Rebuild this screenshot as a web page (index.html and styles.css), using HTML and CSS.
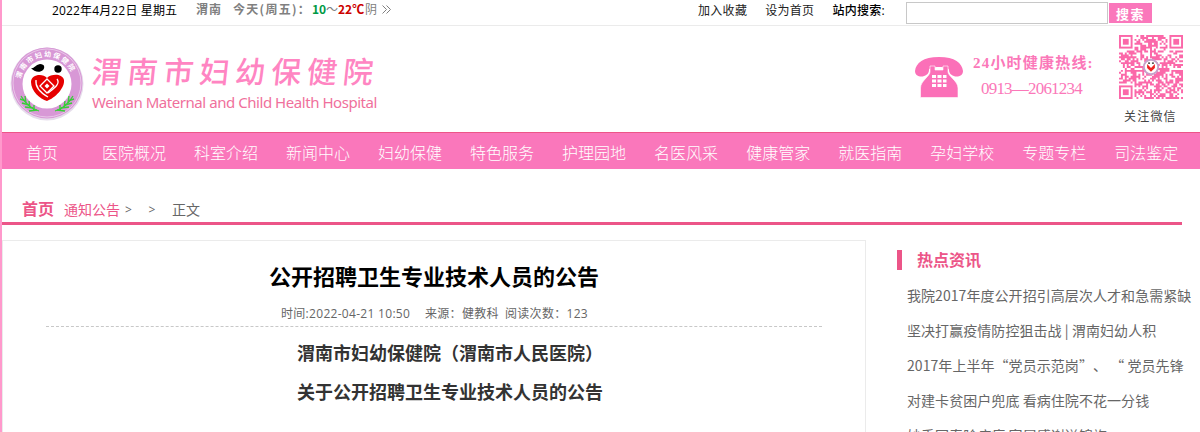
FILE: index.html
```
<!DOCTYPE html>
<html lang="zh-CN">
<head>
    <meta charset="UTF-8">
    <title>公开招聘卫生专业技术人员的公告 - 渭南市妇幼保健院</title>
    <link rel="stylesheet" href="styles.css">
</head>
<body>
    <div class="top-bar">
        <span class="date">2022年4月22日 星期五</span>
        <div class="weather">
            <b class="city">渭南</b>
            <b class="day">今天(周五)：</b>
            <b class="low">10</b><span>～</span><b class="high">22℃</b><span>阴</span>
            <svg class="more" width="9" height="9" viewBox="0 0 9 9"><path d="M.5.5l4 4-4 4M4.5.5l4 4-4 4"/></svg>
        </div>
        <div class="top-links">
            <a href="#">加入收藏</a>
            <a href="#">设为首页</a>
            <label for="keyword">站内搜索:</label>
        </div>
        <form class="search">
            <input type="text" id="keyword">
            <button type="button">搜索</button>
        </form>
    </div>

    <header class="header">
        <svg class="logo" width="74" height="76" viewBox="0 0 74 76">
            <defs>
                <path id="ring" d="M12 46A26.500 26.500 0 1 1 62 46"/>
            </defs>
            <circle cx="37" cy="38" r="36.5" fill="#e6ddeb"/>
            <circle cx="37" cy="37" r="35.5" fill="#d898d6"/>
            <circle cx="37" cy="37" r="34" fill="none" stroke="#ecd0ec" stroke-width=".8"/>
            <circle cx="37" cy="38" r="24.5" fill="#fff"/>
            <text class="logo-ring"><textPath href="#ring" startOffset="13">渭南市妇幼保健院</textPath></text>
            <path d="M21 22c3 1 4-3 9-4 5 0 5 4 3 6-3 3-9 2-12-2z" fill="#000"/>
            <circle cx="48" cy="23" r="3.7" fill="#000"/>
            <path d="M37 32c-4-5-16-4-16 4 0 9 9 17 16 19 8-3 18-13 17-21-2-7-13-6-17-2z" fill="#e60000"/>
            <path d="M26 34c-1 7 5 13 12 17M47 33c4 5-4 10-9 14" fill="none" stroke="#fff" stroke-width="1.3"/>
            <path d="M37 33l7 7-7 7-7-7z" fill="#e60000" stroke="#fff" stroke-width="1.3"/>
            <path d="M37 37.5l2.5 2.5-2.5 2.5-2.5-2.5z" fill="#fff"/>
            <path d="M11 50q7 12 18 15M63 50q-7 12-18 15" fill="none" stroke="#37ce37" stroke-width="1.2"/>
            <path d="M10 53l6 2m-4 2l7 2m-4 2l8 1m-4 3l8-1M15 50l1 7m3-2l1 7m4-3l0 6M64 53l-6 2m4 2l-7 2m4 2l-8 1m4 3l-8-1M59 50l-1 7m-3-2l-1 7m-4-3l0 6" fill="none" stroke="#37ce37" stroke-width="1.4"/>
        </svg>
        <div class="brand">
            <h1>渭南市妇幼保健院</h1>
            <p>Weinan Maternal and Child Health Hospital</p>
        </div>
        <svg class="phone" width="48" height="41" viewBox="0 0 48 41">
            <path d="M0 14C1 6 8 0 24 0s23 6 24 14c0 8-14 7-14-1 0-2-4-3-10-3s-10 1-10 3c0 8-14 9-14 1z"/>
            <path d="M15 9h5v4h8V9h5v6c0 4 10 9 10 16v9.500H5.500V31c0-7 9.500-12 9.500-16z" stroke="#fff" stroke-width=".6"/>
            <path class="keys" d="M17 18h4v3h-4zm5.500 0h4v3h-4zm5.500 0h3.500v3H28zM17 22.500h4v3h-4zm5.500 0h4v3h-4zm5.500 0h3.500v3H28zM17 27h4v3h-4zm5.500 0h4v3h-4zm5.500 0h3.500v3H28z"/>
        </svg>
        <div class="hotline">
            <p class="hotline-title">24小时健康热线:</p>
            <p class="hotline-number">0913—2061234</p>
        </div>
        <div class="wechat">
            <svg id="qr" width="64" height="64" viewBox="0 0 33 33"></svg>
            <p>关注微信</p>
        </div>
    </header>

    <nav>
        <ul class="navbar">
            <li><a href="#">首页</a></li>
            <li><a href="#">医院概况</a></li>
            <li><a href="#">科室介绍</a></li>
            <li><a href="#">新闻中心</a></li>
            <li><a href="#">妇幼保健</a></li>
            <li><a href="#">特色服务</a></li>
            <li><a href="#">护理园地</a></li>
            <li><a href="#">名医风采</a></li>
            <li><a href="#">健康管家</a></li>
            <li><a href="#">就医指南</a></li>
            <li><a href="#">孕妇学校</a></li>
            <li><a href="#">专题专栏</a></li>
            <li><a href="#">司法鉴定</a></li>
        </ul>
    </nav>

    <div class="crumbs">
        <a href="#" class="home">首页</a>
        <a href="#" class="channel">通知公告</a>
        <span class="sep">&gt;</span>
        <span class="sep">&gt;</span>
        <span>正文</span>
    </div>

    <div class="main">
        <div class="article">
            <h2>公开招聘卫生专业技术人员的公告</h2>
            <div class="meta">
                <span class="time">时间:2022-04-21 10:50</span>
                <span class="source">来源：健教科</span>
                <span>阅读次数：123</span>
            </div>
            <div class="content">
                <p>渭南市妇幼保健院（渭南市人民医院）</p>
                <p>关于公开招聘卫生专业技术人员的公告</p>
            </div>
        </div>
        <div class="sidebar">
            <h3>热点资讯</h3>
            <ul>
                <li><a href="#">我院2017年度公开招引高层次人才和急需紧缺</a></li>
                <li><a href="#">坚决打赢疫情防控狙击战 | 渭南妇幼人积</a></li>
                <li><a href="#">2017年上半年“党员示范岗”、 “ 党员先锋</a></li>
                <li><a href="#">对建卡贫困户兜底 看病住院不花一分钱</a></li>
                <li><a href="#">妙手回春除病痛 家属感谢送锦旗</a></li>
            </ul>
        </div>
    </div>

    <script src="qr.js"></script>
</body>
</html>
```
FILE: styles.css
```
:root {
    --pink: #fa77bb;
    --rose: #ec5588;
    --text: #666;
}

* {
    margin: 0;
    padding: 0;
    box-sizing: border-box;
}

body {
    height: 432px;
    overflow: hidden;
    border-left: 2px solid #ff99cc;
    background: #fff;
    font-family: "Open Sans", "Noto Sans CJK SC", sans-serif;
    font-size: 12px;
    color: var(--text);
}

a {
    color: inherit;
    text-decoration: none;
}

ul {
    list-style: none;
}

.top-bar {
    display: flex;
    height: 26px;
    border-bottom: 1px solid #ebebeb;
    line-height: 21px;
}

.date {
    width: 144px;
    padding-left: 50px;
    box-sizing: content-box;
    color: #000;
    letter-spacing: .15px;
    white-space: nowrap;
}

.weather {
    display: flex;
    width: 502px;
    line-height: 18px;
    color: #808080;
    font-family: "Noto Sans CJK SC", sans-serif;
    white-space: nowrap;
}

.city {
    width: 37px;
    letter-spacing: 1px;
}

.day {
    width: 79px;
    letter-spacing: 1.3px;
}

.low {
    width: 14px;
    color: #009944;
}

.high {
    width: 27px;
    color: #c00;
}

.more {
    margin: 5px 0 0 5px;
    fill: none;
    stroke: #808080;
}

.top-links {
    display: flex;
    width: 208px;
    gap: 18px;
    color: #222;
    letter-spacing: .3px;
}

.top-links label {
    color: #000;
    font-weight: 500;
}

.search {
    display: flex;
    gap: 1px;
    padding-top: 2px;
}

.search input {
    width: 202px;
    height: 22px;
    border: 1px solid #c8c8c8;
}

.search button {
    width: 43px;
    height: 20px;
    margin-top: 1px;
    border: none;
    background: var(--pink);
    color: #fff;
    font: bold 13px/17px "Noto Sans CJK SC", sans-serif;
    letter-spacing: 1.5px;
}

.header {
    display: flex;
    height: 106px;
}

.logo {
    margin: 20px 0 0 8px;
}

.logo-ring {
    fill: #fff;
    font: bold 7px "Noto Sans CJK SC", sans-serif;
    letter-spacing: 1.6px;
}

.brand {
    width: 831px;
    padding: 23px 0 0 8px;
    white-space: nowrap;
}

.brand h1 {
    height: 43px;
    color: #ff85c2;
    font: 500 30px/43px "Noto Sans CJK SC", sans-serif;
    letter-spacing: 5.900px;
    transform: skewX(-6deg);
}

.brand p {
    color: #f0709c;
    font: 15px/20px "Noto Sans", sans-serif;
    letter-spacing: -.45px;
}

.phone {
    margin-top: 31px;
    fill: #fb70b8;
}

.phone .keys {
    fill: #fff;
}

.hotline {
    width: 156px;
    padding: 24px 0 0 10px;
    color: #fb78b9;
    white-space: nowrap;
}

.hotline-title {
    font: bold 15px/26px "Liberation Serif", "Noto Sans CJK SC", serif;
    letter-spacing: 1.2px;
}

.hotline-number {
    padding-left: 8px;
    font: 17px/25px "Liberation Serif", serif;
    letter-spacing: -.8px;
}

.wechat {
    width: 64px;
    padding-top: 9px;
}

.wechat svg {
    display: block;
}

.wechat p {
    margin-left: 5px;
    color: #444;
    font-size: 12px;
    line-height: 35px;
    letter-spacing: 1.2px;
    white-space: nowrap;
}

nav {
    height: 37px;
    border-top: 1px solid var(--rose);
    background: var(--pink);
}

.navbar {
    display: flex;
    gap: 28px;
    padding-left: 24px;
    color: #fff;
    font-size: 16px;
    font-weight: 300;
    line-height: 40px;
    white-space: nowrap;
}

.navbar li:first-child {
    margin-right: 16px;
}

.crumbs {
    display: flex;
    width: 1180px;
    height: 56px;
    padding: 28px 0 0 20px;
    border-bottom: 3px solid var(--rose);
    font-size: 14px;
    line-height: 26px;
}

.home {
    width: 42px;
    color: var(--rose);
    font-size: 16px;
    font-weight: bold;
    line-height: 24px;
}

.channel {
    width: 61px;
    color: var(--rose);
}

.sep {
    width: 23.5px;
    font-size: 12px;
}

.main {
    display: flex;
    margin-top: 15px;
}

.article {
    width: 864px;
    height: 210px;
    padding: 19px 43px 0;
    border: 1px solid #ebebeb;
}

.article h2 {
    color: #000;
    font-size: 22px;
    line-height: 32px;
    text-align: center;
}

.meta {
    display: flex;
    height: 35px;
    padding-left: 235px;
    border-bottom: 1px dashed #c8c8c8;
    line-height: 43px;
    letter-spacing: .3px;
    white-space: nowrap;
}

.time {
    width: 144px;
}

.source {
    width: 80px;
}

.content {
    padding: 7px 0 0 251px;
    color: #333;
    font-size: 18px;
    font-weight: bold;
    line-height: 39px;
    white-space: nowrap;
}

.sidebar {
    padding: 10px 0 0 31px;
    font-family: "Noto Sans CJK SC", sans-serif;
}

.sidebar h3 {
    height: 20px;
    margin-bottom: 8px;
    padding-left: 15px;
    border-left: 5px solid var(--rose);
    color: var(--rose);
    font-size: 16px;
    line-height: 19px;
}

.sidebar li {
    padding-left: 10px;
    font-size: 14px;
    line-height: 35px;
    letter-spacing: .06px;
    text-spacing-trim: space-all;
    font-kerning: none;
    white-space: nowrap;
}
```
FILE: qr.js
```
const svg = document.getElementById('qr');
const size = 33;
let seed = 29;
let d = '';

function random() {
    seed = (seed * 1103515245 + 12345) % 2147483648;
    return seed / 2147483648;
}

for (let y = 0; y < size; y++) {
    for (let x = 0; x < size; x++) {
        const inCorner = (x < 8 && y < 8) || (x > 24 && y < 8) || (x < 8 && y > 24);
        if (random() < 0.58 && !inCorner) {
            d += `M${x} ${y}h1v1h-1z`;
        }
    }
}

let markup = `<path d="${d}" fill="#fb68a9"/>`;
[[0, 0], [26, 0], [0, 26]].forEach(([x, y]) => {
    markup += `<rect x="${x + 0.5}" y="${y + 0.5}" width="6" height="6" fill="none" stroke="#fb68a9"/>`;
    markup += `<rect x="${x + 2}" y="${y + 2}" width="3" height="3" fill="#fb68a9"/>`;
});
markup += '<circle cx="16.500" cy="16.500" r="3.700" fill="#fff" stroke="#c6a0ca"/>';
markup += '<path d="M14.500 15v2l2 2 2-2v-2l-2 2z" fill="#e22"/><path d="M15 14.500h1m1 0h1" stroke="#222" stroke-width=".6"/>';
svg.innerHTML = markup;
```
